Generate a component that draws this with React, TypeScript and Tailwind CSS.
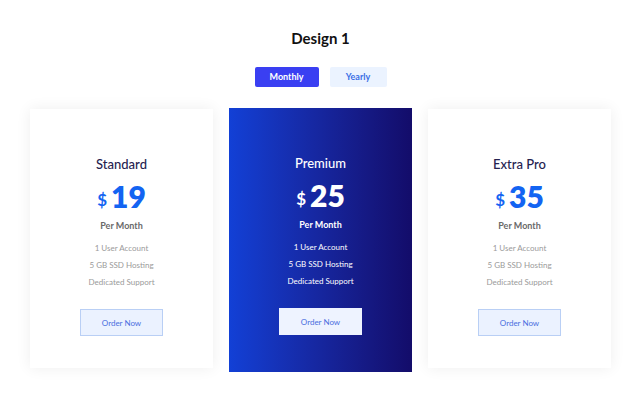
const plans = [
  { name: "Standard", price: "19", featured: false },
  { name: "Premium", price: "25", featured: true },
  { name: "Extra Pro", price: "35", featured: false },
];

const features = ["1 User Account", "5 GB SSD Hosting", "Dedicated Support"];

function PlanCard({ name, price, featured }: { name: string; price: string; featured: boolean }) {
  return (
    <div
      className={
        featured
          ? "flex h-[264px] w-[183px] flex-col items-center bg-gradient-to-r from-[#1240d6] to-[#130c6a] pt-[47px]"
          : "mt-[1px] flex h-[259px] w-[183px] flex-col items-center bg-white pt-[47px] shadow-[0_0_14px_rgba(0,0,0,0.07)]"
      }
    >
      <div className={`text-[13px] font-medium leading-4 ${featured ? "text-white" : "text-[#25224f]"}`}>{name}</div>
      <div className={`mt-[9px] flex items-end gap-[4px] ${featured ? "text-white" : "text-[#1364f2]"}`}>
        <span className="mb-[3px] text-[17px] font-bold leading-none">$</span>
        <span className="text-[30px] font-extrabold leading-[30px]">{price}</span>
      </div>
      <div className={`mt-[9px] text-[9px] font-bold leading-3 ${featured ? "text-white" : "text-[#6a6a6a]"}`}>Per Month</div>
      <div className={`mt-[10px] flex flex-col items-center gap-[5px] text-[8px] leading-3 ${featured ? "text-white" : "text-[#9a9a9a]"}`}>
        {features.map((f) => (
          <div key={f}>{f}</div>
        ))}
      </div>
      <button
        type="button"
        className={
          featured
            ? "mt-[21px] h-[27px] w-[83px] bg-[#eef3ff] text-[8px] text-[#4a6fe0]"
            : "mt-[21px] h-[27px] w-[83px] border border-[#b9cff5] bg-[#ebf2ff] text-[8px] text-[#4a6fe0]"
        }
      >
        Order Now
      </button>
    </div>
  );
}

export default function App() {
  return (
    <div className="flex min-h-[411px] w-full flex-col items-center bg-white pr-[3px] pt-[28px] font-['Lato','Noto_Sans',sans-serif]">
      <h1 className="text-[15px] font-bold leading-5 text-[#111]">Design 1</h1>
      <div className="mt-[19px] flex gap-[11px]">
        <button type="button" className="h-[20px] w-[64px] rounded-[2px] bg-[#3a3ff2] text-[9px] font-bold text-white">
          Monthly
        </button>
        <button type="button" className="h-[20px] w-[57px] rounded-[2px] bg-[#ebf3ff] text-[9px] font-bold text-[#3a6fe6]">
          Yearly
        </button>
      </div>
      <div className="mt-[21px] flex items-start gap-[16px]">
        {plans.map((p) => (
          <PlanCard key={p.name} {...p} />
        ))}
      </div>
    </div>
  );
}
